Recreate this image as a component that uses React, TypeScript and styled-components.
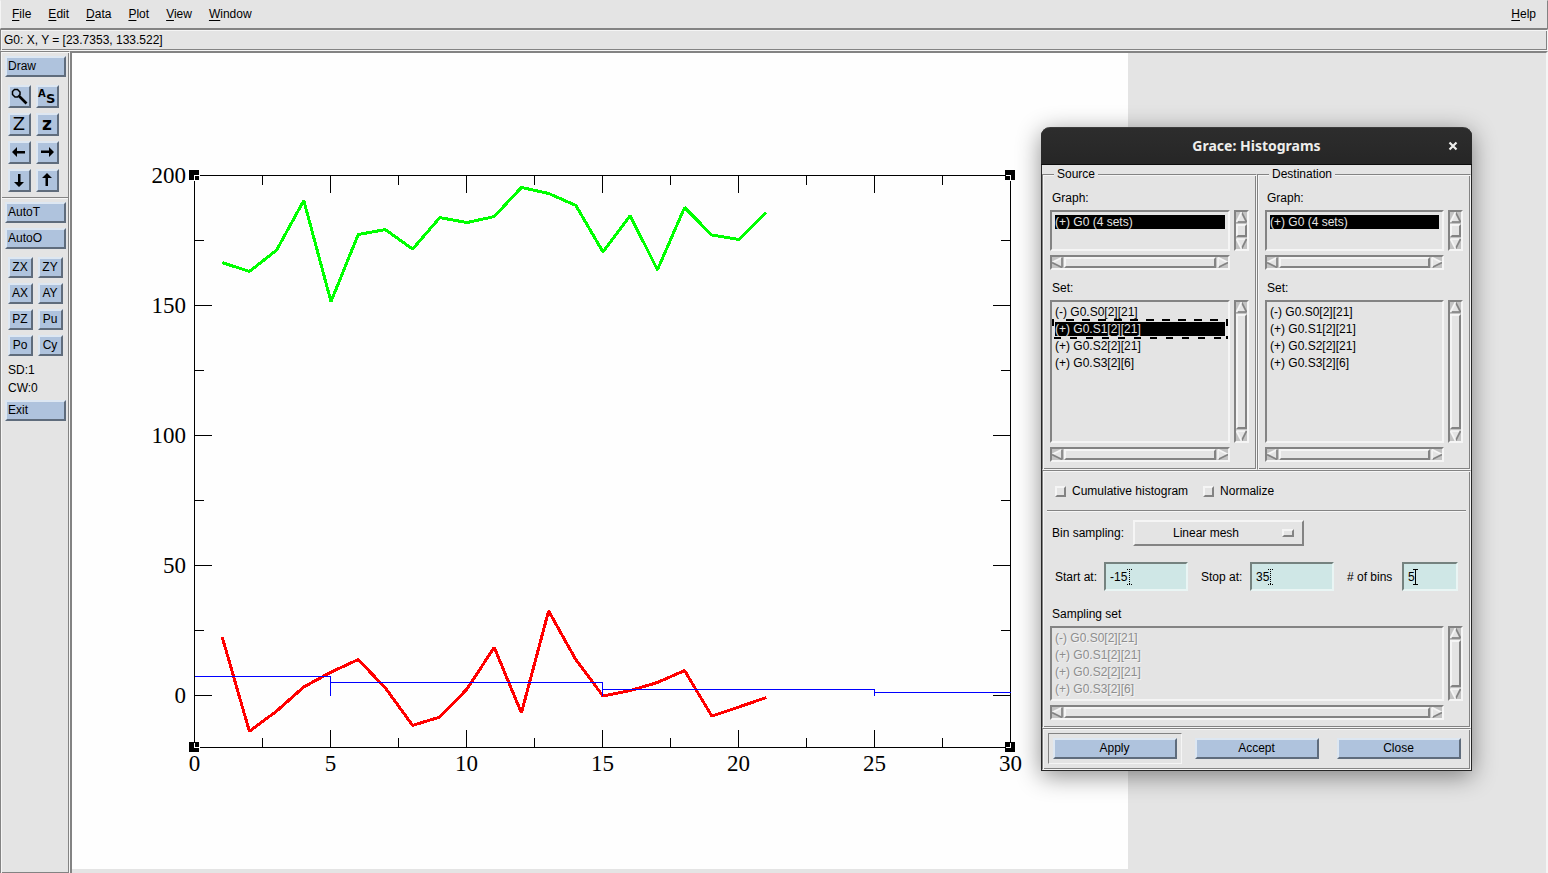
import React from 'react';
import styled, { createGlobalStyle, css } from 'styled-components';

const c = {
  face: '#e4e4e4',
  dark: '#838383',
  light: '#f5f5f5',
  trough: '#c3c3c3',
  blue: '#afc3dd',
  blueLight: '#dde7f2',
  blueDark: '#5f6c7c',
  field: '#cfe7e6',
};

const Global = createGlobalStyle`
  *, *::after { box-sizing: border-box; }
  body {
    margin: 0;
    background: ${c.face};
    color: #000;
    font: 12px/16px "Liberation Sans", Arial, sans-serif;
    overflow: hidden;
  }
  button, input, select { font: inherit; color: inherit; margin: 0; border-radius: 0; }
`;

const groove = css`
  border: 1px solid;
  border-color: ${c.dark} ${c.light} ${c.light} ${c.dark};
  box-shadow: inset 1px 1px ${c.light}, inset -1px -1px ${c.dark};
`;
const raised = css`
  border: 2px solid;
  border-color: ${c.light} ${c.dark} ${c.dark} ${c.light};
`;
const sunken = css`
  border: 2px solid;
  border-color: ${c.dark} ${c.light} ${c.light} ${c.dark};
`;

/* ---------- main window ---------- */

const Page = styled.div`
  position: relative;
  display: flex;
  flex-direction: column;
  height: 100vh;
  min-width: 1200px;
`;

const MenuBar = styled.nav`
  display: flex;
  gap: 17px;
  flex: none;
  padding: 5px 11px 6px;
  border: 1px solid;
  border-color: ${c.face} ${c.dark} ${c.dark} ${c.light};
`;

const MenuItem = styled.button<{ $last?: boolean }>`
  padding: 0;
  border: 0;
  background: none;
  margin-left: ${(p) => (p.$last ? 'auto' : 0)};
  u { text-underline-offset: 2px; }
`;

const StatusBar = styled.div`
  ${groove}
  flex: none;
  height: 22px;
  padding: 2px 3px;
`;

const Work = styled.div`
  display: flex;
  flex: 1;
  min-height: 0;
`;

const SideBar = styled.aside`
  ${groove}
  flex: none;
  display: flex;
  flex-direction: column;
  width: 70px;
  padding: 4px;
  border-bottom: 0;
`;

const BlueButton = styled.button`
  border: 2px solid;
  border-color: ${c.blueLight} ${c.blueDark} ${c.blueDark} ${c.blueLight};
  background: ${c.blue};
  height: 21px;
  padding: 0 1px 1px 0;
  line-height: 16px;
`;

const WideButton = styled(BlueButton)`
  width: 61px;
  padding-left: 1px;
  text-align: left;
  & + & { margin-top: 5px; }
`;

const IconButton = styled(BlueButton)`
  height: 23px;
  padding: 0;
  svg { display: block; overflow: visible; }
`;

const ToolGrid = styled.div<{ $col: number }>`
  display: grid;
  grid-template-columns: ${(p) => p.$col}px ${(p) => p.$col}px;
  gap: 5px;
  padding-left: 3px;
  margin: 8px 0 5px;
`;

const Rule = styled.hr`
  height: 2px;
  margin: 0 -3px;
  border: 0;
  border-top: 1px solid ${c.dark};
  border-bottom: 1px solid ${c.light};
`;

const ToolGroup = styled.div`
  display: flex;
  flex-direction: column;
  padding-top: 3px;
`;

const SideNotes = styled.div`
  padding: 0 3px 3px;
  line-height: 18px;
`;

const Canvas = styled.main`
  ${sunken}
  border-bottom: 0;
  flex: 1;
  min-width: 0;
  overflow: hidden;
  svg { display: block; background: #fefefe; }
`;

/* ---------- dialog ---------- */

const Dialog = styled.section`
  position: absolute;
  top: 127px;
  right: 76px;
  width: 431px;
  border: 1px solid #262626;
  border-top: 0;
  border-radius: 9px 9px 0 0;
  background: ${c.face};
  box-shadow: 0 5px 24px rgba(0, 0, 0, 0.45);
`;

const TitleBar = styled.header`
  display: grid;
  grid-template-columns: 38px 1fr 38px;
  align-items: center;
  height: 38px;
  margin: 0 -1px;
  border-top: 1px solid #3c3c3c;
  border-bottom: 1px solid #0c0c0c;
  border-radius: 9px 9px 0 0;
  background: linear-gradient(#2d2d2d, #262626);
  color: #eeeeec;
  h1 {
    grid-column: 2;
    margin: 0;
    text-align: center;
    font: bold 14px/20px "Noto Sans", sans-serif;
  }
`;

const CloseX = styled.button`
  display: grid;
  place-items: center;
  height: 36px;
  padding: 0;
  border: 0;
  background: none;
`;

const Columns = styled.div`
  display: grid;
  grid-template-columns: 215px 1fr;
  padding-top: 1px;
`;

const Group = styled.fieldset`
  ${groove}
  min-width: 0;
  margin: 0;
  padding: 8px 7px 7px;
  legend {
    margin-left: 4px;
    padding: 0 3px;
    background: ${c.face};
  }
`;

const Panel = styled.div`
  ${groove}
  padding: 12px 7px 7px;
`;

const Caption = styled.div<{ $gap?: number }>`
  margin: ${(p) => p.$gap ?? 0}px 0 4px;
  padding-left: 2px;
`;

const ListGrid = styled.div<{ $h: number }>`
  display: grid;
  grid-template-columns: 1fr 15px;
  grid-template-rows: ${(p) => p.$h}px 15px;
  gap: 4px;
`;

const ListBox = styled.ul<{ $off?: boolean }>`
  ${sunken}
  display: flex;
  flex-direction: column;
  gap: 3px;
  margin: 0;
  padding: 3px;
  list-style: none;
  ${(p) => p.$off && css`color: #8d8d8d; text-shadow: 1px 1px ${c.light};`}
`;

const Item = styled.li<{ $sel?: boolean; $focus?: boolean }>`
  position: relative;
  height: 14px;
  line-height: 14px;
  white-space: nowrap;
  ${(p) => p.$sel && css`background: #000; color: ${c.face};`}
  ${(p) => p.$focus && css`
    &::after {
      content: "";
      position: absolute;
      inset: -3px;
      background:
        repeating-linear-gradient(90deg, transparent 0 8px, #000 8px 16px) 6px 0 / 100% 2px no-repeat,
        repeating-linear-gradient(90deg, #000 0 7px, transparent 7px 16px) 2px 100% / 100% 2px no-repeat,
        linear-gradient(#000, #000) 0 0 / 2px 7px no-repeat,
        linear-gradient(#000, #000) 100% 0 / 2px 7px no-repeat,
        linear-gradient(#000, #000) 100% 100% / 2px 3px no-repeat;
    }
  `}
`;

const Trough = styled.div<{ $v?: boolean }>`
  ${sunken}
  display: flex;
  flex-direction: ${(p) => (p.$v ? 'column' : 'row')};
  gap: 1px;
  background: ${c.trough};
  svg { flex: none; display: block; }
`;

const Thumb = styled.div`
  ${raised}
  flex: 1;
  background: ${c.face};
`;

const CheckRow = styled.div`
  display: flex;
  gap: 15px;
  padding-left: 5px;
  margin-bottom: 11px;
`;

const CheckLabel = styled.label`
  display: flex;
  align-items: center;
  gap: 6px;
`;

const Check = styled.input`
  ${raised}
  appearance: none;
  width: 11px;
  height: 11px;
`;

const OptionRow = styled.div`
  display: flex;
  align-items: center;
  margin: 8px 0 16px;
  padding-left: 2px;
  label { width: 81px; }
`;

const OptionBox = styled.div`
  position: relative;
  width: 171px;
  &::after {
    ${raised}
    content: "";
    position: absolute;
    right: 10px;
    top: 9px;
    width: 12px;
    height: 8px;
    pointer-events: none;
  }
`;

const Option = styled.select`
  ${raised}
  appearance: none;
  display: block;
  width: 100%;
  height: 26px;
  padding: 0 0 0 38px;
  background: ${c.face};
  outline: 0;
`;

const Fields = styled.div`
  display: flex;
  gap: 13px;
  padding-left: 5px;
`;

const Field = styled.div<{ $label: number; $w: number }>`
  display: grid;
  grid-template-columns: ${(p) => p.$label}px ${(p) => p.$w}px;
  align-items: center;
  label { white-space: nowrap; }
`;

const InputWrap = styled.div`
  position: relative;
  svg {
    position: absolute;
    top: 7px;
    display: block;
  }
`;

const TextInput = styled.input`
  display: block;
  width: 100%;
  height: 29px;
  padding: 0 4px;
  border: 2px solid;
  border-color: #75827f #e9f5f4 #e9f5f4 #75827f;
  background: ${c.field};
  outline: 0;
`;

const Actions = styled.footer`
  ${groove}
  display: grid;
  grid-template-columns: repeat(3, 1fr);
  gap: 8px;
  padding: 4px 4px 5px 5px;
`;

const ActionCell = styled.div<{ $default?: boolean }>`
  padding: 4px;
  border: 1px solid transparent;
  ${(p) => p.$default && css`border-color: ${c.dark} ${c.light} ${c.light} ${c.dark};`}
  button { display: block; width: 100%; }
`;

/* ---------- icons ---------- */

const Icon = ({ children }: { children: React.ReactNode }) => (
  <svg width="19" height="19" viewBox="2 2 19 19" aria-hidden="true">{children}</svg>
);

const Magnifier = () => (
  <Icon>
    <path d="M6.5 4.5h3l2.500 2.500v2.500l-2.500 2.500h-2.500l-2.500-2.500v-3z" fill="none" stroke="#000" strokeWidth="1.500" />
    <path d="M11 11l7.500 7.500" stroke="#000" strokeWidth="2.600" />
  </Icon>
);
const AutoScale = () => (
  <Icon>
    <text x="2" y="12" fontFamily="DejaVu Sans, sans-serif" fontWeight="bold" fontSize="10">A</text>
    <text x="10" y="18" fontFamily="DejaVu Sans, sans-serif" fontWeight="bold" fontSize="13">S</text>
  </Icon>
);
const BigZ = () => (
  <Icon>
    <text x="11" y="17" textAnchor="middle" fontFamily="DejaVu Sans, sans-serif" fontSize="18">Z</text>
  </Icon>
);
const SmallZ = () => (
  <Icon>
    <text x="11" y="17" textAnchor="middle" fontFamily="DejaVu Sans, sans-serif" fontWeight="bold" fontSize="17">z</text>
  </Icon>
);
const Arrow = ({ turn }: { turn: number }) => (
  <Icon>
    <g transform={`rotate(${turn} 11 11)`}>
      <path d="M4 11l5-5v4h8v2.500h-8v3.500z" />
    </g>
  </Icon>
);

const turns = { left: 0, up: 90, right: 180, down: 270 };

/* Each triangle lists its points, then the tone of the edge that starts at each point. */
const arrows = {
  left: { pts: [[0, 5.5], [10, 0.5], [10, 10.5]], tones: [c.light, c.dark, c.dark] },
  up: { pts: [[5.5, 0], [10.5, 10], [0.5, 10]], tones: [c.dark, c.dark, c.light] },
  right: { pts: [[1, 0.5], [11, 5.5], [1, 10.5]], tones: [c.light, c.dark, c.light] },
  down: { pts: [[0.5, 1], [10.5, 1], [5.5, 11]], tones: [c.light, c.dark, c.light] },
};

function ScrollArrow({ dir }: { dir: keyof typeof arrows }) {
  const { pts, tones } = arrows[dir];
  return (
    <svg width="11" height="11" viewBox="0 0 11 11" aria-hidden="true">
      <path d={`M${pts.join('L')}z`} fill={c.face} />
      {pts.map((p, i) => (
        <path key={i} d={`M${p}L${pts[(i + 1) % 3]}`} stroke={tones[i]} strokeWidth="1.700" />
      ))}
    </svg>
  );
}

const Scroll = ({ v }: { v?: boolean }) => (
  <Trough $v={v} role="scrollbar" aria-orientation={v ? 'vertical' : 'horizontal'}>
    <ScrollArrow dir={v ? 'up' : 'left'} />
    <Thumb />
    <ScrollArrow dir={v ? 'down' : 'right'} />
  </Trough>
);

/* ---------- plot ---------- */

const green = [166.5, 163.1, 171.3, 190.4, 151.5, 177.3, 179.2, 171.7, 183.8, 181.9, 184.2, 195.4, 193.1, 188.5, 170.6, 184.6, 163.7, 187.7, 177.1, 175.4, 185.8];
const red = [22.5, -13.8, -6, 3.3, 9, 13.8, 2.9, -11.5, -8.3, 2.5, 18.5, -6.7, 32.5, 13.8, -0.2, 1.9, 5, 9.6, -7.9, -4.4, -0.8];

const L = 122, R = 938, T = 122, B = 694;
const sx = (x: number) => L + 27.2 * x;
const sy = (y: number) => 642 - 2.6 * y;
const line = (d: number[]) => d.map((y, i) => `${sx(i + 1) + 1},${sy(y) + 0.5}`).join(' ');

function Plot() {
  const xs = Array.from({ length: 13 }, (_, i) => i * 2.5);
  const ys = Array.from({ length: 9 }, (_, i) => i * 25);
  const ticks: string[] = [];
  xs.forEach((x) => {
    const n = x % 5 ? 10 : 18;
    const p = Math.floor(sx(x) + 0.01) + 0.5;
    ticks.push(`M${p} ${T}v${n}M${p} ${B + 1}v${-n}`);
  });
  ys.forEach((y) => {
    const n = y % 50 ? 10 : 18;
    const p = Math.floor(sy(y) + 0.01) + 0.5;
    ticks.push(`M${L} ${p}h${n}M${R + 1} ${p}h${-n}`);
  });
  const corners = [[L, T, 1, 1], [R, T, -1, 1], [L, B, 1, -1], [R, B, -1, -1]];
  return (
    <svg width="1056" height="816" viewBox="0 0 1056 816" role="img" aria-label="Plot of four data sets">
      <g fill="none">
        <g shapeRendering="crispEdges">
          <rect x={L + 0.5} y={T + 0.5} width={R - L} height={B - T} stroke="#000" />
          <path d={ticks.join('')} stroke="#000" />
        </g>
        <g strokeWidth="3" strokeLinejoin="bevel" shapeRendering="crispEdges">
          <polyline points={line(green)} stroke="#00ff00" />
          <polyline points={line(red)} stroke="#ff0000" />
        </g>
        <path
          d="M122.500 623.500H258.500V643M258.500 629.500H530.500V643M530.500 636.500H802.500V643M802.500 639.500H938.500"
          stroke="#0000ff"
          shapeRendering="crispEdges"
        />
      </g>
      <g shapeRendering="crispEdges">
        {corners.map(([x, y, dx, dy]) => (
          <g key={`${x}-${y}`}>
            <rect x={x - 5} y={y - 5} width="10" height="10" />
            <path d={`M${x + 0.5 + dx * 5} ${y + 0.5}H${x + 0.5}V${y + 0.5 + dy * 5}`} fill="none" stroke="#fff" />
          </g>
        ))}
      </g>
      <g fontFamily="Liberation Serif, Times New Roman, serif" fontSize="23">
        {[0, 5, 10, 15, 20, 25, 30].map((x) => (
          <text key={x} x={sx(x) + 0.5} y={B + 24} textAnchor="middle">{x}</text>
        ))}
        {[0, 50, 100, 150, 200].map((y) => (
          <text key={y} x={L - 8} y={sy(y) + 8} textAnchor="end">{y}</text>
        ))}
      </g>
    </svg>
  );
}

/* ---------- dialog parts ---------- */

const sets = ['(-) G0.S0[2][21]', '(+) G0.S1[2][21]', '(+) G0.S2[2][21]', '(+) G0.S3[2][6]'];

type ListProps = { label: string; items: string[]; height: number; selected?: number; focused?: boolean; off?: boolean };
const List = ({ label, items, height, selected, focused, off }: ListProps) => (
  <ListGrid $h={height}>
    <ListBox role="listbox" aria-label={label} aria-disabled={off} $off={off}>
      {items.map((t, i) => (
        <Item key={t} role="option" aria-selected={i === selected} $sel={i === selected} $focus={focused && i === selected}>
          {t}
        </Item>
      ))}
    </ListBox>
    <Scroll v />
    <Scroll />
  </ListGrid>
);

const Chooser = ({ title, selected }: { title: string; selected?: number }) => (
  <Group>
    <legend>{title}</legend>
    <Caption>Graph:</Caption>
    <List label={`${title} graph`} items={['(+) G0 (4 sets)']} height={41} selected={0} />
    <Caption $gap={10}>Set:</Caption>
    <List label={`${title} set`} items={sets} height={143} selected={selected} focused />
  </Group>
);

const Caret = ({ x, active }: { x: number; active?: boolean }) => (
  <svg width="5" height="16" viewBox="0 0 5 16" style={{ left: x }} aria-hidden="true" shapeRendering="crispEdges">
    <path
      d="M0 .5h5M2.500 0v16M0 15.500h5"
      stroke="#000"
      strokeDasharray={active ? undefined : '1 1'}
    />
  </svg>
);

type EntryProps = { id: string; label: string; value: string; labelWidth: number; width: number; caret: number; active?: boolean };
const Entry = ({ id, label, value, labelWidth, width, caret, active }: EntryProps) => (
  <Field $label={labelWidth} $w={width}>
    <label htmlFor={id}>{label}</label>
    <InputWrap>
      <TextInput id={id} defaultValue={value} />
      <Caret x={caret} active={active} />
    </InputWrap>
  </Field>
);

function HistogramDialog() {
  return (
    <Dialog role="dialog" aria-labelledby="dialog-title">
      <TitleBar>
        <h1 id="dialog-title">Grace: Histograms</h1>
        <CloseX aria-label="Close window">
          <svg width="10" height="10" viewBox="0 0 10 10" aria-hidden="true">
            <path d="M1.500 1.500l7 7M8.500 1.500l-7 7" stroke="#eeeeec" strokeWidth="2.200" />
          </svg>
        </CloseX>
      </TitleBar>
      <Columns>
        <Chooser title="Source" selected={1} />
        <Chooser title="Destination" />
      </Columns>
      <Panel>
        <CheckRow>
          <CheckLabel><Check type="checkbox" />Cumulative histogram</CheckLabel>
          <CheckLabel><Check type="checkbox" />Normalize</CheckLabel>
        </CheckRow>
        <Rule />
        <OptionRow>
          <label htmlFor="mesh">Bin sampling:</label>
          <OptionBox>
            <Option id="mesh"><option>Linear mesh</option></Option>
          </OptionBox>
        </OptionRow>
        <Fields>
          <Entry id="start" label="Start at:" value="-15" labelWidth={49} width={84} caret={23} />
          <Entry id="stop" label="Stop at:" value="35" labelWidth={49} width={84} caret={18} />
          <Entry id="bins" label="# of bins" value="5" labelWidth={55} width={56} caret={11} active />
        </Fields>
        <Caption $gap={15}>Sampling set</Caption>
        <List label="Sampling set" items={sets} height={75} off />
      </Panel>
      <Actions>
        <ActionCell $default><BlueButton>Apply</BlueButton></ActionCell>
        <ActionCell><BlueButton>Accept</BlueButton></ActionCell>
        <ActionCell><BlueButton>Close</BlueButton></ActionCell>
      </Actions>
    </Dialog>
  );
}

const menus = ['File', 'Edit', 'Data', 'Plot', 'View', 'Window', 'Help'];

export default function App() {
  return (
    <Page>
      <Global />
      <MenuBar>
        {menus.map((m) => (
          <MenuItem key={m} $last={m === 'Help'}><u>{m[0]}</u>{m.slice(1)}</MenuItem>
        ))}
      </MenuBar>
      <StatusBar>G0: X, Y = [23.7353, 133.522]</StatusBar>
      <Work>
        <SideBar>
          <WideButton>Draw</WideButton>
          <ToolGrid $col={23}>
            <IconButton aria-label="Zoom"><Magnifier /></IconButton>
            <IconButton aria-label="Autoscale"><AutoScale /></IconButton>
            <IconButton aria-label="Zoom in"><BigZ /></IconButton>
            <IconButton aria-label="Zoom out"><SmallZ /></IconButton>
            <IconButton aria-label="Left"><Arrow turn={turns.left} /></IconButton>
            <IconButton aria-label="Right"><Arrow turn={turns.right} /></IconButton>
            <IconButton aria-label="Down"><Arrow turn={turns.down} /></IconButton>
            <IconButton aria-label="Up"><Arrow turn={turns.up} /></IconButton>
          </ToolGrid>
          <Rule />
          <ToolGroup>
            <WideButton>AutoT</WideButton>
            <WideButton>AutoO</WideButton>
          </ToolGroup>
          <ToolGrid $col={25}>
            {['ZX', 'ZY', 'AX', 'AY', 'PZ', 'Pu', 'Po', 'Cy'].map((t) => (
              <BlueButton key={t}>{t}</BlueButton>
            ))}
          </ToolGrid>
          <SideNotes>
            <div>SD:1</div>
            <div>CW:0</div>
          </SideNotes>
          <WideButton>Exit</WideButton>
        </SideBar>
        <Canvas><Plot /></Canvas>
      </Work>
      <HistogramDialog />
    </Page>
  );
}
